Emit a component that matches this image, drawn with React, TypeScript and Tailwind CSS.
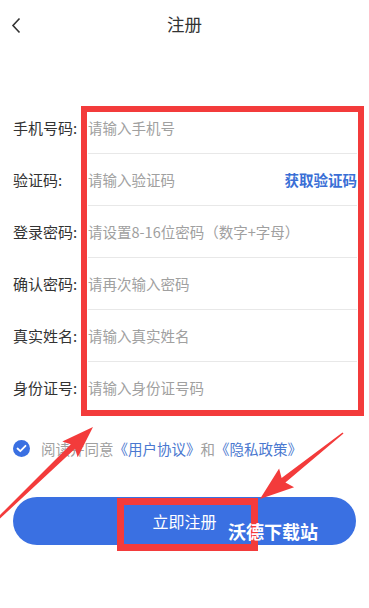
import React from 'react';

const FONT = { fontFamily: '"Noto Sans CJK SC", "Noto Sans", sans-serif' };

const FIELDS = [
  { label: '手机号码:', placeholder: '请输入手机号' },
  { label: '验证码:', placeholder: '请输入验证码', action: '获取验证码' },
  { label: '登录密码:', placeholder: '请设置8-16位密码（数字+字母）' },
  { label: '确认密码:', placeholder: '请再次输入密码' },
  { label: '真实姓名:', placeholder: '请输入真实姓名' },
  { label: '身份证号:', placeholder: '请输入身份证号码' },
];

export default function App() {
  return (
    <div className="relative w-[369px] h-[608px] bg-white overflow-hidden" style={FONT}>
      {/* Header */}
      <div className="relative h-[51px] flex items-center justify-center">
        <svg className="absolute left-[11px] top-[17px]" width="11" height="17" viewBox="0 0 11 17">
          <path d="M8.5 1.5 L2 8.5 L8.5 15.5" fill="none" stroke="#333" strokeWidth="1.6" />
        </svg>
        <span className="text-[17.5px] text-[#333] -mt-[3px]">注册</span>
      </div>

      {/* Form */}
      <div className="mt-[51px]">
        {FIELDS.map((f, i) => (
          <div key={f.label} className="flex h-[52px]">
            <div className="w-[88px] pl-[13px] flex items-center text-[15px] text-[#333] whitespace-nowrap">
              {f.label}
            </div>
            <div
              className={`flex-1 mr-[12px] flex items-center justify-between ${i < FIELDS.length - 1 ? 'border-b border-[#e8e8e8]' : ''}`}
            >
              <span className="text-[14.5px] text-[#a0a0a0] whitespace-nowrap">{f.placeholder}</span>
              {f.action && (
                <span className="text-[14.5px] font-bold text-[#3a6fd6] whitespace-nowrap">{f.action}</span>
              )}
            </div>
          </div>
        ))}
      </div>

      {/* Agreement */}
      <div className="mt-[26px] pl-[13px] flex items-center gap-[11px] h-[17px]">
        <span className="w-[17px] h-[17px] rounded-full bg-[#3a70e2] flex items-center justify-center">
          <svg width="11" height="9" viewBox="0 0 11 9">
            <path d="M1.5 4.5 L4.3 7.2 L9.5 1.8" fill="none" stroke="#fff" strokeWidth="1.8" strokeLinecap="round" strokeLinejoin="round" />
          </svg>
        </span>
        <span className="text-[14.5px] text-[#a0a0a0] whitespace-nowrap">
          阅读并同意<span className="text-[#4a78d0]">《用户协议》</span>和<span className="text-[#4a78d0]">《隐私政策》</span>
        </span>
      </div>

      {/* Submit */}
      <div className="mt-[40px] px-[13px]">
        <button className="w-full h-[48px] rounded-full bg-[#3a70e2] text-white text-[16px] flex items-center justify-center">
          立即注册
        </button>
      </div>

      {/* Annotations */}
      <div className="absolute left-[81px] top-[106px] w-[283px] h-[310px] border-[6px] border-[#f33b3b]" />
      <div className="absolute left-[117px] top-[498px] w-[141px] h-[53px] border-[7px] border-[#f33b3b]" />
      <svg className="absolute left-0 top-0 pointer-events-none" width="369" height="608" viewBox="0 0 369 608">
        <polygon
          points="93,427 62.3,441.4 70.8,444.3 0,515 0,518.5 75,448.7 77.7,457.2"
          fill="#f33b3b"
        />
        <polygon
          points="260,499 279.1,468.4 281.6,478 342.5,432.5 343.5,433.5 285.4,482.6 294.1,487.2"
          fill="#f33b3b"
        />
      </svg>
      <div className="absolute left-[228px] top-[522px] text-[18px] font-bold text-white leading-none whitespace-nowrap">
        沃德下载站
      </div>
    </div>
  );
}
